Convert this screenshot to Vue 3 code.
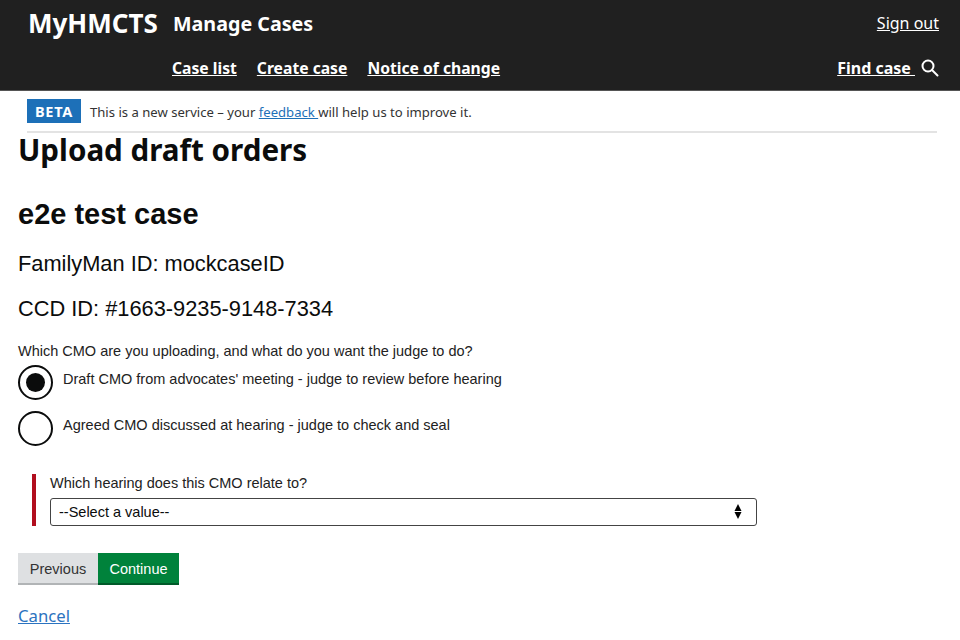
<script setup>
import { ref } from 'vue'

const choice = ref('draft')
const options = [
  { id: 'draft', label: "Draft CMO from advocates' meeting - judge to review before hearing" },
  { id: 'agreed', label: 'Agreed CMO discussed at hearing - judge to check and seal' }
]
const navLinks = ['Case list', 'Create case', 'Notice of change']
</script>

<template>
  <div class="page">
    <header class="header">
      <div class="top-row">
        <a class="brand">MyHMCTS</a>
        <a class="service">Manage Cases</a>
        <a class="sign-out">Sign out</a>
      </div>
      <div class="nav-row">
        <nav class="nav">
          <a v-for="link in navLinks" :key="link" class="nav-link">{{ link }}</a>
        </nav>
        <div class="find">
          <a class="find-link">Find case&nbsp;</a>
          <svg class="search" width="18" height="18" viewBox="0 0 18 18" fill="none" stroke="#fff" stroke-width="2">
            <circle cx="7" cy="7" r="5.5" />
            <path d="M11 11 L16.5 16.5" stroke-linecap="round" />
          </svg>
        </div>
      </div>
    </header>

    <div class="phase">
      <strong class="tag">BETA</strong>
      <span class="phase-text">This is a new service – your <a class="feedback">feedback </a>will help us to improve it.</span>
    </div>

    <main class="content">
      <h1 class="title">Upload draft orders</h1>
      <h2 class="case-name">e2e test case</h2>
      <p class="case-meta first">FamilyMan ID: mockcaseID</p>
      <p class="case-meta">CCD ID: #1663-9235-9148-7334</p>

      <p class="question">Which CMO are you uploading, and what do you want the judge to do?</p>
      <div class="radios">
        <label v-for="opt in options" :key="opt.id" class="radio" @click="choice = opt.id">
          <span class="radio-mark" :class="{ checked: choice === opt.id }"></span>
          <span class="radio-label">{{ opt.label }}</span>
        </label>
      </div>

      <div class="conditional">
        <label class="select-label" for="hearing">Which hearing does this CMO relate to?</label>
        <div class="select-wrap">
          <select id="hearing" class="select">
            <option>--Select a value--</option>
          </select>
          <svg class="select-arrows" width="8" height="15" viewBox="0 0 8 15" fill="#000">
            <path d="M4 0 L7.5 7 L0.5 7 Z" />
            <path d="M0.5 8 L7.5 8 L4 15 Z" />
          </svg>
        </div>
      </div>

      <div class="buttons">
        <button class="btn btn-prev">Previous</button>
        <button class="btn btn-next">Continue</button>
      </div>

      <a class="cancel">Cancel</a>
    </main>
  </div>
</template>

<style>
html, body {
  background: #fff;
}
</style>

<style scoped>
.page {
  width: 960px;
  height: 640px;
  overflow: hidden;
  font-family: "Liberation Sans", Arial, sans-serif;
  color: #0b0c0c;
}

.header {
  height: 91px;
  box-sizing: border-box;
  background: #202020;
  border-bottom: 1px solid #555;
  color: #fff;
  font-family: "Noto Sans", sans-serif;
  padding: 0 21px 0 28px;
}

.top-row {
  display: flex;
  align-items: center;
  height: 46px;
}

.brand {
  font-size: 26px;
  font-weight: 700;
  width: 145px;
}

.service {
  font-size: 19.7px;
  font-weight: 700;
}

.sign-out {
  margin-left: auto;
  font-size: 16px;
  text-decoration: underline;
}

.nav-row {
  display: flex;
  align-items: center;
  justify-content: space-between;
  padding-left: 144px;
  height: 44px;
}

.nav {
  display: flex;
  gap: 20px;
}

.nav-link {
  font-size: 15.7px;
  font-weight: 700;
  text-decoration: underline;
}

.find {
  display: flex;
  align-items: center;
  gap: 6px;
}

.find-link {
  font-size: 16px;
  font-weight: 700;
  text-decoration: underline;
  white-space: pre;
}

.phase {
  margin: 0 23px 0 27px;
  height: 42px;
  box-sizing: border-box;
  display: flex;
  align-items: center;
  gap: 9px;
  border-bottom: 2px solid #e3e3e3;
}

.tag {
  background: #1d70b8;
  color: #fff;
  font-family: "Noto Sans", sans-serif;
  font-size: 14.5px;
  font-weight: 700;
  letter-spacing: 0.7px;
  width: 54px;
  height: 24px;
  display: flex;
  align-items: center;
  justify-content: center;
}

.phase-text {
  font-family: "Noto Sans", sans-serif;
  font-size: 13.1px;
  color: #333;
  padding-top: 1px;
}

.feedback {
  color: #1d70b8;
  text-decoration: underline;
}

.content {
  padding-left: 18px;
}

.title {
  margin: 0;
  font-family: "Noto Sans", sans-serif;
  font-size: 29.6px;
  font-weight: 700;
  line-height: 34px;
}

.case-name {
  margin: 29px 0 0;
  font-size: 29px;
  font-weight: 700;
  line-height: 36px;
}

.case-meta {
  margin: 19px 0 0;
  font-size: 21.8px;
  line-height: 26px;
}

.question {
  margin: 20px 0 0;
  font-size: 14.5px;
  line-height: 18px;
  color: #222;
}

.radios {
  display: flex;
  flex-direction: column;
  gap: 11px;
  margin-top: 5px;
}

.radio {
  display: flex;
  align-items: center;
  gap: 10px;
  height: 35px;
}

.radio-mark {
  width: 35px;
  height: 35px;
  box-sizing: border-box;
  border: 2px solid #0b0c0c;
  border-radius: 50%;
  display: flex;
  align-items: center;
  justify-content: center;
}

.radio-mark.checked::after {
  content: "";
  width: 19px;
  height: 19px;
  border-radius: 50%;
  background: #0b0c0c;
}

.radio-label {
  font-size: 14.5px;
  line-height: 18px;
  color: #222;
  padding-bottom: 7px;
}

.conditional {
  margin: 28px 0 0 14px;
  border-left: 4px solid #b10e1e;
  padding-left: 14px;
  width: 707px;
}

.select-label {
  display: block;
  font-size: 14.5px;
  line-height: 18px;
  margin-bottom: 6px;
  color: #222;
}

.select-wrap {
  position: relative;
}

.select {
  display: block;
  width: 100%;
  height: 28px;
  box-sizing: border-box;
  appearance: none;
  background: #fff;
  border: 1px solid #444;
  border-radius: 3px;
  padding: 0 8px;
  font-family: "Liberation Sans", Arial, sans-serif;
  font-size: 14.5px;
  color: #0b0c0c;
}

.select-arrows {
  position: absolute;
  right: 15px;
  top: 6px;
  pointer-events: none;
}

.buttons {
  display: flex;
  margin-top: 27px;
}

.btn {
  height: 32px;
  border: 0;
  font-family: "Liberation Sans", Arial, sans-serif;
  font-size: 14.5px;
  padding: 0;
}

.btn-prev {
  width: 80px;
  background: #dee0e2;
  color: #333;
  box-shadow: inset 0 -2px 0 #b1b4b6;
}

.btn-next {
  width: 81px;
  background: #00823b;
  color: #fff;
  box-shadow: inset 0 -2px 0 #005a29;
}

.cancel {
  display: inline-block;
  margin-top: 19px;
  font-family: "Noto Sans", sans-serif;
  font-size: 16.7px;
  color: #2b73c0;
  text-decoration: underline;
}
</style>
